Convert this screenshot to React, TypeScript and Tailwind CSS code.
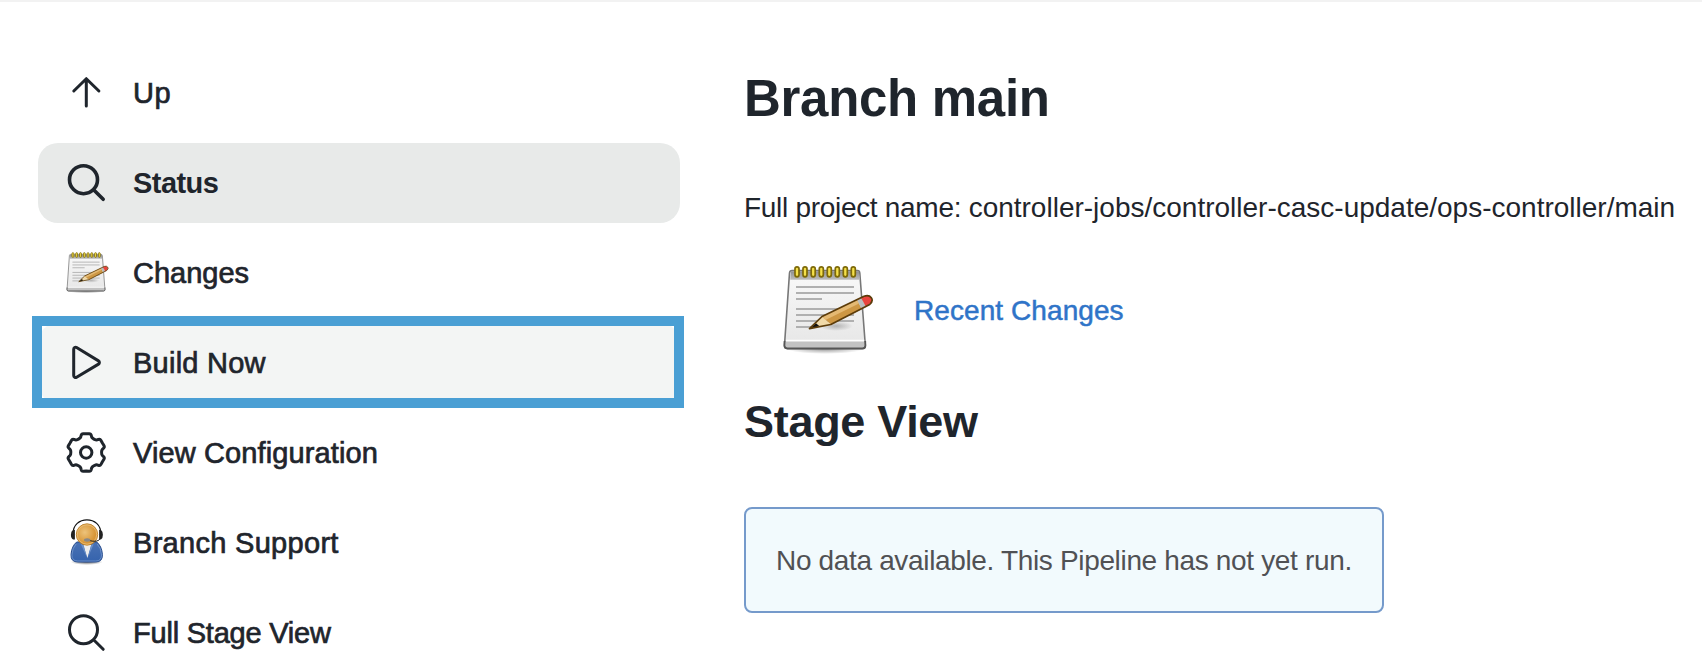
import React from "react";

type Kind = "up" | "search" | "notes" | "play" | "gear" | "support";

function gearPath() {
  const polar = (r: number, deg: number) => {
    const a = (deg * Math.PI) / 180;
    return `${(24.2 + r * Math.sin(a)).toFixed(2)} ${(23.4 - r * Math.cos(a)).toFixed(2)}`;
  };
  let d = "";
  for (let i = 0; i < 6; i++) {
    const c = i * 60;
    d += `${i === 0 ? "M" : "L"}${polar(15.7, c - 23)}`;
    d += `Q${polar(16.2, c - 19)} ${polar(17.8, c - 16.5)}`;
    d += `Q${polar(19.4, c - 14)} ${polar(19, c - 9)}`;
    d += `L${polar(18.7, c)}L${polar(19, c + 9)}`;
    d += `Q${polar(19.4, c + 14)} ${polar(17.8, c + 16.5)}`;
    d += `Q${polar(16.2, c + 19)} ${polar(15.7, c + 23)}`;
    d += `Q${polar(15.1, c + 30)} ${polar(15.7, c + 37)}`;
  }
  return d + "Z";
}

function Notes({ className }: { className: string }) {
  return (
    <svg viewBox="0 0 96 96" className={className}>
      <defs>
        <linearGradient id="paper" x1="0" y1="0" x2="0" y2="1">
          <stop offset="0" stopColor="#f9f9f9" />
          <stop offset="1" stopColor="#e6e6e6" />
        </linearGradient>
        <radialGradient id="paperShadow">
          <stop offset="0" stopColor="#000" stopOpacity=".4" />
          <stop offset="1" stopColor="#000" stopOpacity="0" />
        </radialGradient>
        <linearGradient id="band" x1="0" y1="0" x2="0" y2="1">
          <stop offset="0" stopColor="#8f8f8f" />
          <stop offset="1" stopColor="#bdbdbd" />
        </linearGradient>
      </defs>
      <ellipse cx="47" cy="90" rx="38" ry="5" fill="url(#paperShadow)" />
      <path d="M14 11.500h65.500q2 0 2.300 2.500L87.300 86q.3 3.500-3 3.500H9.500q-3.300 0-3-3.500L11.500 14q.3-2.500 2.500-2.500z" fill="url(#paper)" stroke="#777" strokeWidth="1.600" />
      <path d="M12.800 12.300h68.200l.7 8.500h-69.500z" fill="url(#band)" />
      <path d="M7.400 82.500h79.200l.2 4q0 2-2.500 2H9.500q-2.500 0-2.300-2z" fill="#c2c2c2" />
      <path d="M8 81.500h78.200" stroke="#fff" strokeWidth="1.500" />
      <path d="M6.600 82l-.2 4.500q.2 3 3 3h75q3 0 3-3l-.2-4.500" fill="none" stroke="#555" strokeWidth="1.800" />
      <path d="M18 28h58M18 34h58M18 40h26M18 50h58M18 56h58M18 62h58M18 68h20" stroke="#b0b0b0" strokeWidth="1.900" />
      {[19, 27, 35.2, 43.3, 51.3, 59.3, 67.3, 75.3].map((x) => (
        <rect key={x} x={x - 2} y="7.800" width="4" height="10" rx="2" fill="#f4e04a" stroke="#7d6908" strokeWidth="1.700" />
      ))}
      <ellipse cx="58" cy="67" rx="17" ry="5" fill="url(#paperShadow)" opacity=".6" />
      <path d="M31.500 69.700L44 57.500l9 8z" fill="#f0d9a8" />
      <path d="M44 57.500L79 40.500l5 9.500-31 15.500z" fill="#cd9744" />
      <path d="M44 57.500L79 40.500l2 4L47.500 61z" fill="#e4b973" />
      <path d="M31.500 69.700l6.500-5.500 3.500 3z" fill="#111" />
      <path d="M79 40.500l4-2 5.500 9.500-5 2z" fill="#b9bcbc" />
      <path d="M83 38.500l4-1.500q4-1 6 2t-1 5.500l-4 3.500z" fill="#e8443d" />
      <path d="M31.500 69.700L44 57.500l42-20.300q5-1.700 7.300 1.500t-1.600 6.800L52.800 65.500z" fill="none" stroke="#5c3c0a" strokeWidth="1.700" strokeLinejoin="round" />
    </svg>
  );
}

function Support() {
  return (
    <svg viewBox="0 0 48 48" className="size-12">
      <defs>
        <radialGradient id="face" cx=".4" cy=".4">
          <stop offset="0" stopColor="#edc37b" />
          <stop offset="1" stopColor="#d79536" />
        </radialGradient>
        <linearGradient id="suit" x1="0" y1="0" x2="0" y2="1">
          <stop offset="0" stopColor="#4a72b4" />
          <stop offset="1" stopColor="#3563ad" />
        </linearGradient>
        <radialGradient id="supportShadow">
          <stop offset="0" stopColor="#000" stopOpacity=".6" />
          <stop offset="1" stopColor="#000" stopOpacity="0" />
        </radialGradient>
      </defs>
      <g transform="translate(.7 0)">
        <ellipse cx="24" cy="43" rx="16" ry="3" fill="url(#supportShadow)" />
        <path d="M14 23q-5 4-5.700 12.500Q8 43 15 43h18q7 0 6.700-7.500Q39 27 34 23z" fill="url(#suit)" stroke="#24498a" />
        <path d="M13.500 25q-4 4-4.300 11 0 6 5.800 6h18q5.800 0 5.800-6-.3-7-4.300-11" fill="none" stroke="#7e9fd2" strokeWidth=".7" />
        <path d="M20.500 26h8L24.700 39z" fill="#eee" />
        <path d="M18 25l6 13-3-12zM31 25l-5.500 13 3-12z" fill="#6a8fc8" />
        <circle cx="24.300" cy="15.500" r="10.700" fill="url(#face)" stroke="#b87820" strokeWidth=".8" />
        <circle cx="24.300" cy="15.500" r="9.700" fill="none" stroke="#edc98a" strokeWidth=".7" />
        <path d="M10.500 15C9.500-3.800 39-3.800 38 15" fill="none" stroke="#111" strokeWidth="1.200" />
        <path d="M12.200 11v9.500h-1.800q-2.200-1-2.200-4.700t2.200-4.800zM36.400 11v9.500h1.800q2-1 2-4.700t-2-4.800z" fill="#222" />
        <path d="M37.500 19.500q-2 4.500-12 1.800" fill="none" stroke="#222" strokeWidth="1" />
        <ellipse cx="24.500" cy="21" rx="3.200" ry="1.700" fill="#888" />
      </g>
    </svg>
  );
}

function Icon({ kind, heavy }: { kind: Kind; heavy?: boolean }) {
  if (kind === "notes") return <Notes className="-mt-1 ml-0.5 mr-px size-[45px]" />;
  if (kind === "support") return <Support />;
  return (
    <svg viewBox="0 0 48 48" className="size-12" fill="none" stroke="currentColor" strokeLinecap="round" strokeLinejoin="round" strokeWidth={heavy ? 3.6 : 3}>
      {kind === "gear" && (
        <>
          <path d={gearPath()} />
          <circle cx="24.200" cy="23.500" r="5.700" />
        </>
      )}
      {kind === "up" && <path d="M11.800 22L24.300 9.700L36.900 22M24.300 9.700V37.100" />}
      {kind === "search" && <path d="M21.500 6.700a14 14 0 1 0 0 28a14 14 0 1 0 0-28zM31.600 30.700L41.200 40.300" />}
      {kind === "play" && (
        <path d="M11.700 10.300v26.200c0 1.600 1.600 2.600 2.900 1.800l21.900-13.200c1.200-.7 1.200-2.500 0-3.200L14.600 8.500c-1.300-.8-2.900.2-2.900 1.800z" />
      )}
    </svg>
  );
}

const medium = "[-webkit-text-stroke:0.7px_currentColor]";

const items: { label: string; icon: Kind; row?: string; text: string; active?: boolean }[] = [
  { label: "Up", icon: "up", text: `${medium} tracking-[0.5px]` },
  { label: "Status", icon: "search", row: "bg-[#e8eae9]", text: "font-bold tracking-[-0.55px]", active: true },
  { label: "Changes", icon: "notes", text: medium },
  { label: "Build Now", icon: "play", row: "bg-[#f3f5f4]", text: `${medium} tracking-[0.24px]` },
  { label: "View Configuration", icon: "gear", text: `${medium} tracking-[0.12px]` },
  { label: "Branch Support", icon: "support", text: `${medium} tracking-[0.3px]` },
  { label: "Full Stage View", icon: "search", text: `${medium} tracking-[-0.22px]` },
];

export default function App() {
  return (
    <div className="flex h-[664px] w-[1702px] overflow-hidden border-t-2 border-[#f2f2f2] bg-white font-['Liberation_Sans',Arial,sans-serif] text-[#1f252c]">
      <nav className="ml-[38px] mt-[51px] flex w-[642px] shrink-0 flex-col gap-2.5">
        {items.map((item) => (
          <a key={item.label} className={`relative flex h-20 shrink-0 items-center gap-[23px] rounded-[20px] pl-6 ${item.row ?? ""}`}>
            <Icon kind={item.icon} heavy={item.active} />
            <span className={`whitespace-nowrap text-[29px] leading-8 ${item.text}`}>{item.label}</span>
            {item.icon === "play" && <span className="absolute -left-1.5 -top-[7px] h-[92px] w-[652px] border-10 border-[#4a9fd4]" />}
          </a>
        ))}
      </nav>
      <main className="ml-16 flex flex-col items-start whitespace-nowrap">
        <h1 className="mt-[67px] text-[51px] font-bold leading-[60px] tracking-[-0.3px]">Branch main</h1>
        <p className="mt-[63px] text-[28px] leading-8">
          <span className="tracking-[-0.3px]">Full project name: </span>
          controller-jobs/controller-casc-update/ops-controller/main
        </p>
        <div className="mt-[35px] flex items-center gap-10 pl-[34px]">
          <Notes className="size-24" />
          <a className="mt-2 text-[28px] leading-8 tracking-[0.08px] text-[#2f74c8] [-webkit-text-stroke:0.5px_currentColor]">Recent Changes</a>
        </div>
        <h2 className="mt-[41px] text-[45px] font-bold leading-[52px] tracking-[-0.3px]">Stage View</h2>
        <div className="mt-[59px] flex h-[106px] w-[640px] items-center rounded-lg border-2 border-[#759acb] bg-[#f2fafd] pl-[30px] pt-0.5 text-[28px] leading-8 tracking-[-0.34px] text-[#505154]">
          No data available. This Pipeline has not yet run.
        </div>
      </main>
    </div>
  );
}
